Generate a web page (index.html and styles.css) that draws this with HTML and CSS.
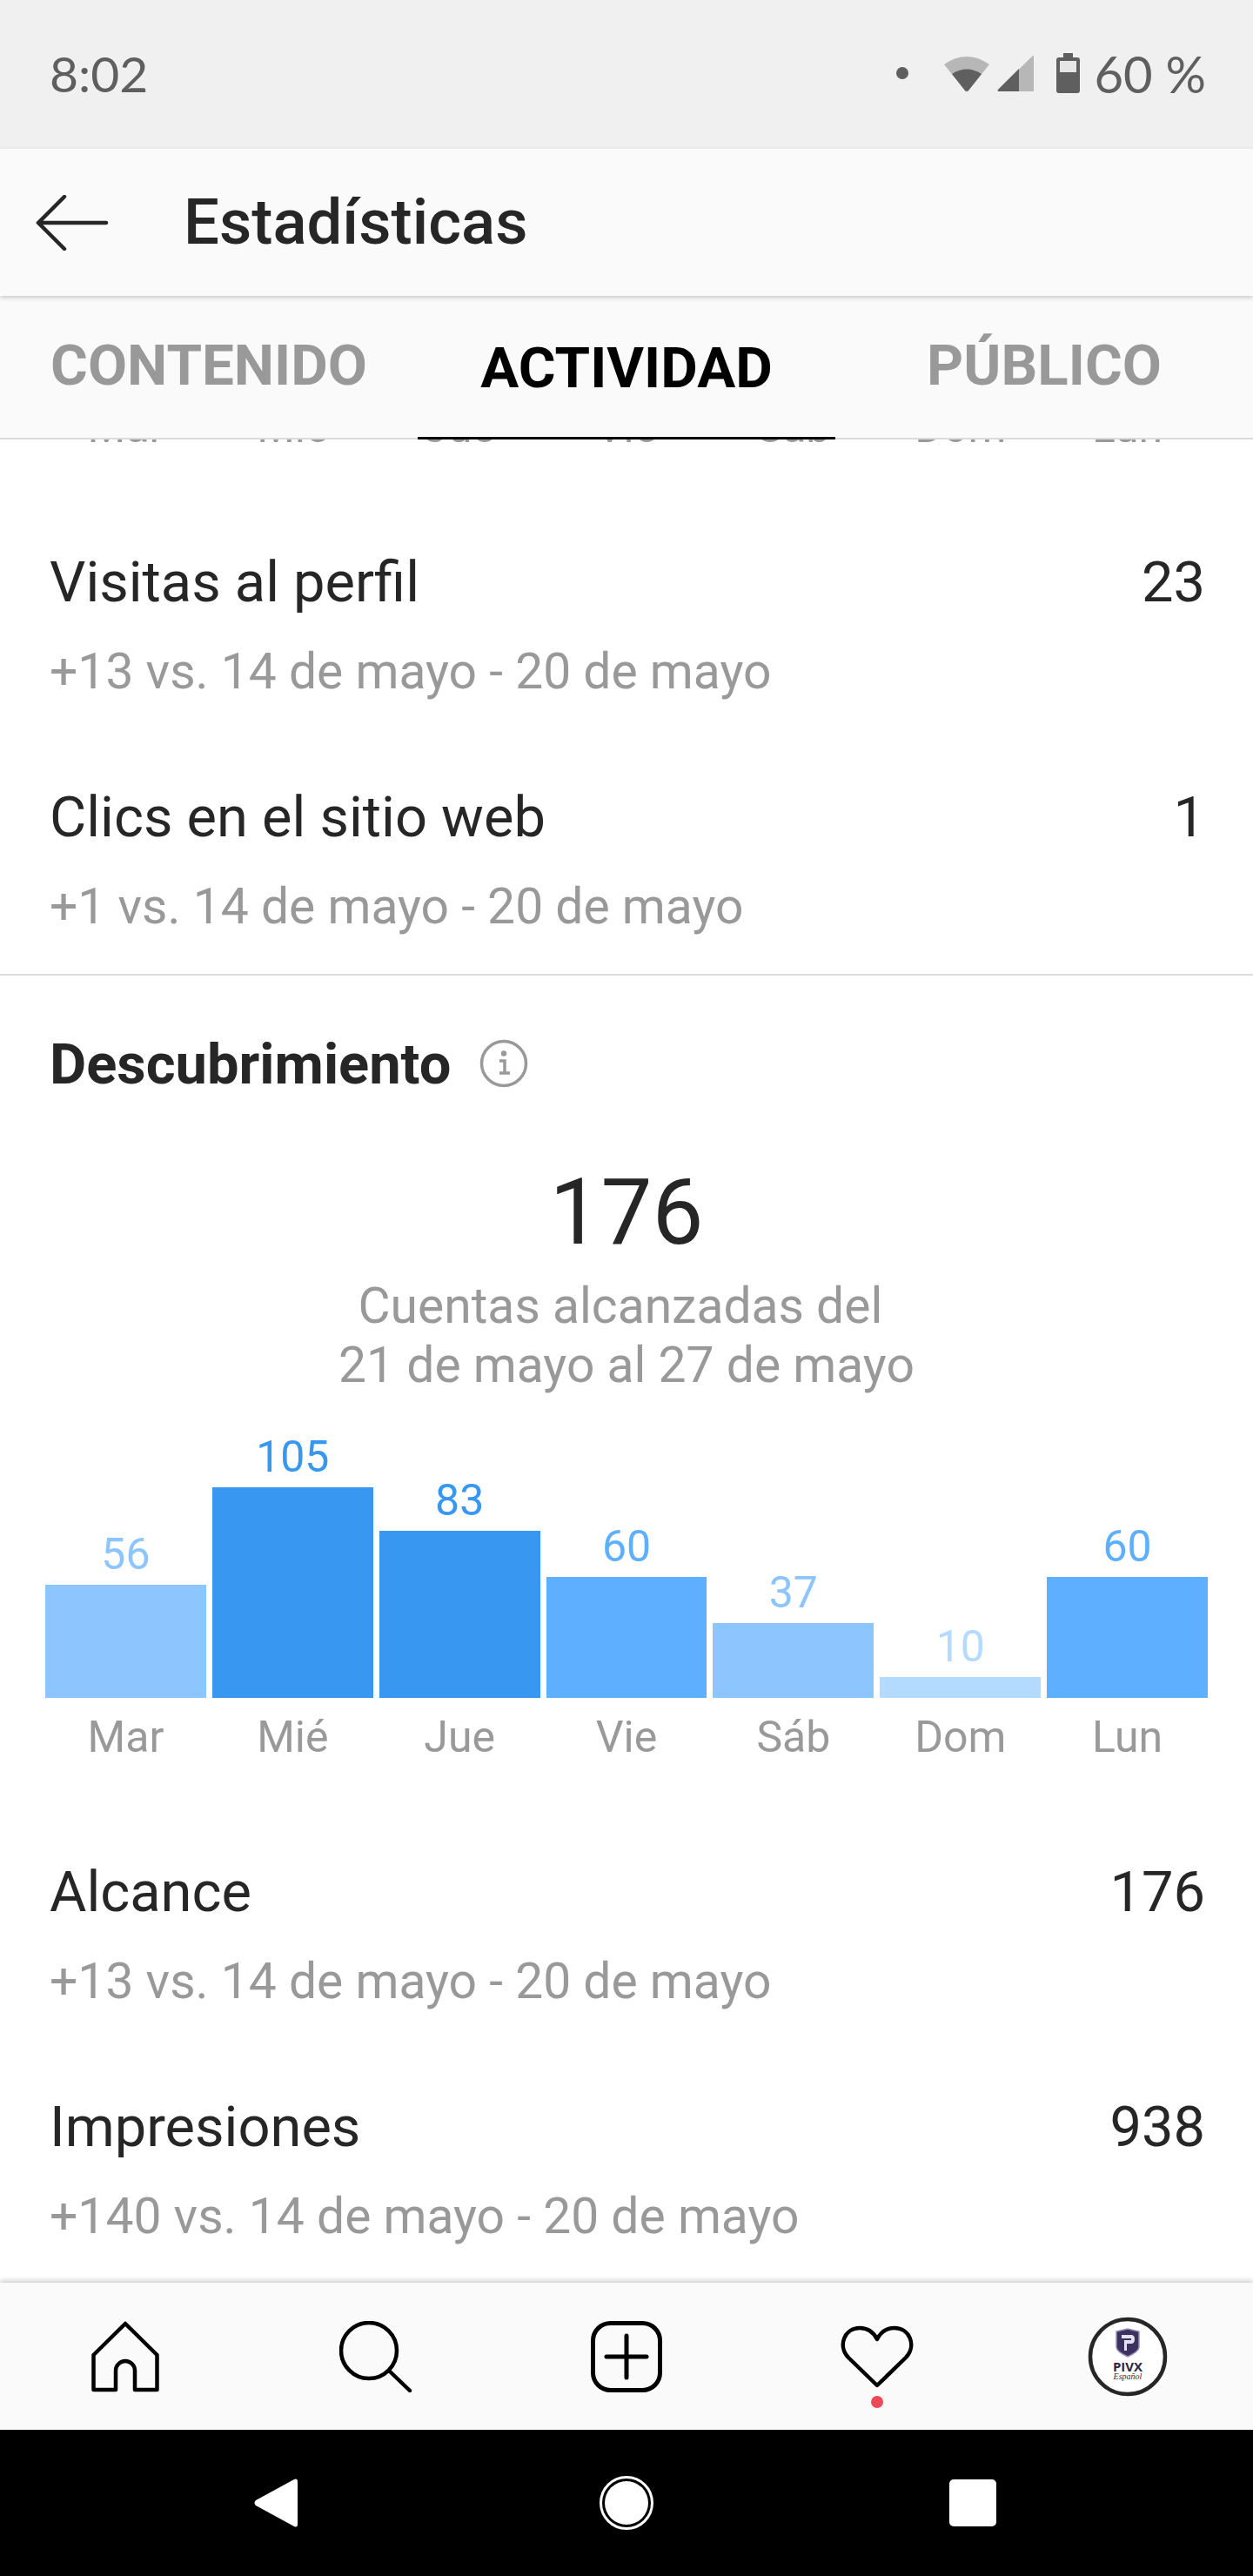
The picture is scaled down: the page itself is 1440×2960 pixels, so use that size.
FILE: index.html
```html
<!DOCTYPE html>
<html lang="es">
<head>
    <meta charset="UTF-8">
    <meta name="viewport" content="width=device-width, initial-scale=1.0">
    <title>Estadísticas</title>
    <link rel="stylesheet" href="styles.css">
</head>

<body>
    <div class="status-bar">
        <span class="clock">8:02</span>
        <div class="status-right">
            <span class="status-dot"></span>
            <svg class="wifi" width="54" height="43" viewBox="0 0 54 43">
                <path d="M1 11 Q27 -7 53 11 L29 41 Q27 43 25 41 Z" fill="#b7b7b7"/>
                <path d="M10 22 Q27 11 44 22 L29 41 Q27 43 25 41 Z" fill="#5f5f5f"/>
            </svg>
            <svg class="signal" width="43" height="43" viewBox="0 0 43 43">
                <path d="M1 40 L41 1 Q42 0 42 2 V42 H2 Q0 42 1 40 Z" fill="#b7b7b7"/>
                <path d="M1 40 L25 16 V42 H2 Q0 42 1 40 Z" fill="#5f5f5f"/>
            </svg>
            <svg class="battery" width="27" height="46" viewBox="0 0 27 46">
                <path d="M8 0 H19 V5 H24 Q27 5 27 8 V43 Q27 46 24 46 H3 Q0 46 0 43 V8 Q0 5 3 5 H8 Z" fill="#5f5f5f"/>
                <rect x="4" y="9" width="19" height="13" fill="#e6e6e6"/>
            </svg>
            <span class="battery-text">60 %</span>
        </div>
    </div>

    <header class="toolbar">
        <svg class="back-arrow" width="84" height="64" viewBox="0 0 84 64">
            <path d="M81 32 H4 M33 2 L3 32 L33 62" fill="none" stroke="#262626" stroke-width="4.5" stroke-linecap="round" stroke-linejoin="round"/>
        </svg>
        <h1 class="page-title">Estadísticas</h1>
    </header>

    <nav class="tabs">
        <div class="tab">CONTENIDO</div>
        <div class="tab active">ACTIVIDAD</div>
        <div class="tab">PÚBLICO</div>
    </nav>

    <main class="content">
        <!-- labels of the chart above, scrolled under the tabs -->
        <div class="peek">
            <div class="days">
                <span>Mar</span><span>Mié</span><span>Jue</span><span>Vie</span><span>Sáb</span><span>Dom</span><span>Lun</span>
            </div>
        </div>

        <section class="stats first">
            <div class="stat">
                <div class="stat-top"><span>Visitas al perfil</span><span>23</span></div>
                <div class="stat-sub">+13 vs. 14 de mayo - 20 de mayo</div>
            </div>
            <div class="stat">
                <div class="stat-top"><span>Clics en el sitio web</span><span>1</span></div>
                <div class="stat-sub">+1 vs. 14 de mayo - 20 de mayo</div>
            </div>
        </section>

        <section class="discovery">
            <div class="section-head">
                <h2>Descubrimiento</h2>
                <svg class="info-icon" width="56" height="56" viewBox="0 0 56 56">
                    <circle cx="28" cy="28" r="25.5" fill="none" stroke="#999" stroke-width="3.5"/>
                    <circle cx="28" cy="16.5" r="3.2" fill="#999"/>
                    <path d="M23 25 H29 V39 M23 39 H35" fill="none" stroke="#999" stroke-width="3.5"/>
                </svg>
            </div>

            <div class="total">176</div>
            <p class="total-label">Cuentas alcanzadas del&nbsp;<br>21 de mayo al 27 de mayo</p>

            <div class="chart">
                <div class="col"><span class="val tone-2">56</span><div class="bar bg-2" style="height:130px"></div></div>
                <div class="col"><span class="val tone-4">105</span><div class="bar bg-4" style="height:242px"></div></div>
                <div class="col"><span class="val tone-4">83</span><div class="bar bg-4" style="height:192px"></div></div>
                <div class="col"><span class="val tone-3">60</span><div class="bar bg-3" style="height:139px"></div></div>
                <div class="col"><span class="val tone-2">37</span><div class="bar bg-2" style="height:86px"></div></div>
                <div class="col"><span class="val tone-1">10</span><div class="bar bg-1" style="height:24px"></div></div>
                <div class="col"><span class="val tone-3">60</span><div class="bar bg-3" style="height:139px"></div></div>
            </div>
            <div class="days chart-days">
                <span>Mar</span><span>Mié</span><span>Jue</span><span>Vie</span><span>Sáb</span><span>Dom</span><span>Lun</span>
            </div>
        </section>

        <section class="stats">
            <div class="stat">
                <div class="stat-top"><span>Alcance</span><span>176</span></div>
                <div class="stat-sub">+13 vs. 14 de mayo - 20 de mayo</div>
            </div>
            <div class="stat">
                <div class="stat-top"><span>Impresiones</span><span>938</span></div>
                <div class="stat-sub">+140 vs. 14 de mayo - 20 de mayo</div>
            </div>
        </section>
    </main>

    <footer class="bottom-nav">
        <div class="nav-item">
            <svg width="78" height="82" viewBox="0 0 78 82">
                <path d="M39 3 L75.500 39 V79 H50 V57 A11 11 0 0 0 28 57 V79 H2.500 V39 Z" fill="none" stroke="#000" stroke-width="4.500" stroke-linejoin="round"/>
            </svg>
        </div>
        <div class="nav-item">
            <svg width="84" height="82" viewBox="0 0 84 82">
                <circle cx="34" cy="34" r="32" fill="none" stroke="#000" stroke-width="4.500"/>
                <path d="M57 57 L81 80" stroke="#000" stroke-width="4.500" stroke-linecap="round"/>
            </svg>
        </div>
        <div class="nav-item">
            <svg width="82" height="82" viewBox="0 0 82 82">
                <rect x="2.500" y="2.500" width="77" height="77" rx="20" fill="none" stroke="#000" stroke-width="5"/>
                <path d="M18 41 H64 M41 17 V65" stroke="#000" stroke-width="5" stroke-linecap="round"/>
            </svg>
        </div>
        <div class="nav-item heart">
            <svg width="84" height="72" viewBox="0 0 84 72">
                <path d="M42 69 L9 37 C-4 23 5 3 22 3 C31 3 38 8 42 16 C46 8 53 3 62 3 C79 3 88 23 75 37 Z" fill="none" stroke="#000" stroke-width="4.500" stroke-linejoin="round"/>
            </svg>
            <span class="notif-dot"></span>
        </div>
        <div class="nav-item">
            <svg class="avatar" width="92" height="92" viewBox="0 0 92 92">
                <circle cx="46" cy="46" r="43" fill="#fff" stroke="#262626" stroke-width="4.500"/>
                <path d="M33 17 L46 14 L59 17 V35 Q59 40 46 46 Q33 40 33 35 Z" fill="#3d3162" stroke="#9a94b0" stroke-width="1.500"/>
                <path d="M39 21 H50 Q54 21 54 26 Q54 31 50 31 H45 V39 H42 V27 H50 V25 H39 Z" fill="#e4e1ee"/>
                <text class="logo-name" x="46" y="63" text-anchor="middle">PIVX</text>
                <text class="logo-sub" x="46" y="72" text-anchor="middle">Español</text>
            </svg>
        </div>
    </footer>

    <div class="system-nav">
        <svg class="nav-back" width="50" height="56" viewBox="0 0 50 56">
            <path d="M46 1 Q50 -1 50 4 V52 Q50 57 46 55 L2 31 Q-1 28 2 25 Z" fill="#fff"/>
        </svg>
        <svg width="62" height="62" viewBox="0 0 62 62">
            <circle cx="31" cy="31" r="29.500" fill="none" stroke="#fff" stroke-width="3"/>
            <circle cx="31" cy="31" r="25" fill="#fff"/>
        </svg>
        <div class="nav-square"></div>
    </div>
</body>

</html>
```

FILE: styles.css
```css
* {
    box-sizing: border-box;
}

body {
    margin: 0;
    width: 1440px;
    height: 2960px;
    display: flex;
    flex-direction: column;
    overflow: hidden;
    background-color: #fff;
    font-family: Roboto, sans-serif;
    color: #262626;
}

.status-bar {
    height: 171px;
    flex: none;
    display: flex;
    justify-content: space-between;
    align-items: center;
    padding: 0 54px 3px 57px;
    background-color: #f0f0f0;
    color: #5f5f5f;
    font-family: Lato, sans-serif;
}

.clock {
    font-size: 57px;
}

.status-right {
    display: flex;
    align-items: center;
}

.status-dot {
    width: 14px;
    height: 14px;
    margin-right: 40px;
    border-radius: 50%;
    background-color: #5f5f5f;
}

.wifi {
    margin-right: 8px;
}

.signal {
    margin-right: 25px;
}

.battery {
    margin-right: 16px;
}

.battery-text {
    font-size: 58px;
}

.toolbar {
    height: 169px;
    flex: none;
    display: flex;
    align-items: center;
    padding-left: 41px;
    background-color: #fafafa;
    box-shadow: 0 2px 5px rgba(0, 0, 0, 0.2);
    position: relative;
    z-index: 2;
}

.page-title {
    margin: 0 0 0 86px;
    font-size: 72.500px;
    font-weight: 500;
}

.tabs {
    height: 165px;
    flex: none;
    display: flex;
    background-color: #fafafa;
    border-bottom: 2px solid #dbdbdb;
    position: relative;
    z-index: 1;
}

.tab {
    width: 480px;
    padding-top: 41px;
    text-align: center;
    font-size: 65.500px;
    font-weight: 700;
    color: #999;
}

.tab.active {
    padding-top: 44px;
    color: #000;
    border-bottom: 3px solid #000;
    margin-bottom: -2px;
}

.content {
    flex: 1;
    overflow: hidden;
}

.peek {
    height: 8px;
    overflow: hidden;
}

.peek .days {
    margin-top: -43px;
}

.days {
    display: flex;
    gap: 7px;
    padding: 0 52px;
}

.days span {
    width: 185px;
    text-align: center;
    font-size: 50px;
    line-height: 58px;
    color: #999;
}

.stats {
    padding: 0 55px 0 57px;
}

.stats.first {
    padding-top: 126px;
    border-bottom: 2px solid #dbdbdb;
    height: 608px;
}

.stat {
    margin-bottom: 107px;
}

.stat-top {
    display: flex;
    justify-content: space-between;
    font-size: 65px;
    line-height: 60px;
}

.stat-sub {
    margin-top: 43px;
    font-size: 57px;
    line-height: 60px;
    color: #999;
}

.discovery {
    padding-top: 72px;
}

.section-head {
    display: flex;
    align-items: center;
    gap: 33px;
    padding-left: 57px;
}

.section-head h2 {
    margin: 0;
    font-size: 65px;
    line-height: 60px;
    font-weight: 700;
}

.info-icon {
    margin-bottom: 2px;
}

.total {
    margin-top: 81px;
    text-align: center;
    font-size: 105px;
    line-height: 120px;
}

.total-label {
    margin: 13px 0 0;
    text-align: center;
    font-size: 57px;
    line-height: 68px;
    color: #999;
}

.chart {
    height: 330px;
    margin-top: 18px;
    display: flex;
    align-items: flex-end;
    gap: 7px;
    padding: 0 52px;
}

.col {
    width: 185px;
    display: flex;
    flex-direction: column;
    align-items: center;
}

.val {
    font-size: 50px;
    line-height: 58px;
    margin-bottom: 6px;
}

.bar {
    width: 100%;
}

.tone-1 { color: #b3dbff; }
.tone-2 { color: #8cc5ff; }
.tone-3 { color: #5eafff; }
.tone-4 { color: #3897f0; }

.bg-1 { background-color: #b3dbff; }
.bg-2 { background-color: #8cc5ff; }
.bg-3 { background-color: #5eafff; }
.bg-4 { background-color: #3897f0; }

.chart-days {
    margin-top: 16px;
}

.discovery + .stats {
    padding-top: 119px;
}

.bottom-nav {
    height: 169px;
    flex: none;
    display: flex;
    background-color: #fafafa;
    box-shadow: 0 -2px 6px rgba(0, 0, 0, 0.22);
    position: relative;
}

.nav-item {
    width: 288px;
    display: flex;
    align-items: center;
    justify-content: center;
}

.nav-item.heart {
    position: relative;
}

.notif-dot {
    position: absolute;
    left: 137px;
    top: 130px;
    width: 14px;
    height: 14px;
    border-radius: 50%;
    background-color: #ed4956;
}

.logo-name {
    font-family: "Open Sans", sans-serif;
    font-size: 15px;
    font-weight: 700;
    fill: #2d2745;
}

.logo-sub {
    font-family: "Liberation Serif", serif;
    font-style: italic;
    font-size: 10px;
    fill: #333;
}

.system-nav {
    height: 168px;
    flex: none;
    display: flex;
    align-items: center;
    background-color: #000;
    padding-left: 292px;
    gap: 340px;
}

.nav-back {
    margin-right: 7px;
}

.nav-square {
    width: 54px;
    height: 54px;
    border-radius: 5px;
    background-color: #fff;
}
```
